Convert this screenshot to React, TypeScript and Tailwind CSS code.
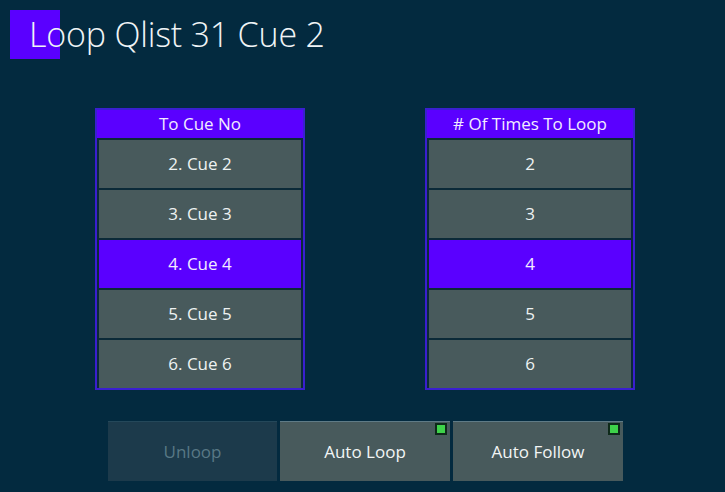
import React from "react";

const cues = ["2. Cue 2", "3. Cue 3", "4. Cue 4", "5. Cue 5", "6. Cue 6"];
const times = ["2", "3", "4", "5", "6"];
const selected = 2;

function PickList({ title, items }: { title: string; items: string[] }) {
  return (
    <div className="w-[210px] border-2 border-[#3a1fd0] bg-[#0b2a38]">
      <div className="flex h-[28px] items-center justify-center bg-[#5a00ff] text-[17px] text-[#f2ecff]">
        {title}
      </div>
      <div className="flex flex-col gap-[2px] px-[2px] pt-[2px]">
        {items.map((item, i) => (
          <div
            key={item}
            className={`flex h-[48px] items-center justify-center text-[17px] ${
              i === selected ? "bg-[#5a00ff] text-[#f2ecff]" : "bg-[#485a5c] text-[#eef2f2]"
            }`}
          >
            {item}
          </div>
        ))}
      </div>
    </div>
  );
}

function ToggleButton({ label, on, disabled }: { label: string; on?: boolean; disabled?: boolean }) {
  return (
    <div
      className={`relative flex h-[60px] items-center justify-center border-t text-[17px] ${
        disabled
          ? "w-[169px] border-[#24485a] bg-[#1c3a4b] text-[#587885]"
          : "w-[170px] border-[#5f7b86] bg-[#485a5c] text-[#f2f5f5]"
      }`}
    >
      {label}
      {on && (
        <span className="absolute right-[3px] top-[1px] h-[12px] w-[12px] border-2 border-[#0e2a1a] bg-[#3ed24a]" />
      )}
    </div>
  );
}

export default function App() {
  return (
    <div
      className="relative h-[492px] w-[725px] overflow-hidden bg-[#032a3f]"
      style={{ fontFamily: '"Open Sans", "Noto Sans", sans-serif' }}
    >
      <div className="relative h-[98px]">
        <span className="absolute left-[10px] top-[10px] h-[49px] w-[50px] bg-[#5a00ff]" />
        <h1 className="absolute left-[29px] top-[10px] text-[34px] font-light leading-[48px] tracking-[-0.2px] text-[#f0f4f6]">
          Loop Qlist 31 Cue 2
        </h1>
      </div>
      <div className="ml-[95px] mt-[10px] flex gap-[120px]">
        <PickList title="To Cue No" items={cues} />
        <PickList title="# Of Times To Loop" items={times} />
      </div>
      <div className="ml-[108px] mt-[31px] flex gap-[3px]">
        <ToggleButton label="Unloop" disabled />
        <ToggleButton label="Auto Loop" on />
        <ToggleButton label="Auto Follow" on />
      </div>
    </div>
  );
}
